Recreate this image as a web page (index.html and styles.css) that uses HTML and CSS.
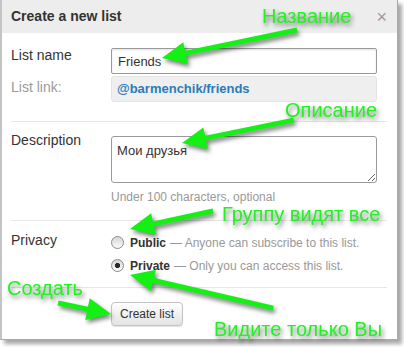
FILE: index.html
```html
<!DOCTYPE html>
<html lang="en">
<head>
<meta charset="utf-8">
<title>Create a new list</title>
<link rel="stylesheet" href="styles.css">
</head>
<body>
<div class="page">
  <div class="dialog">
    <div class="hd">
      <h3 class="title">Create a new list</h3>
      <span class="close">×</span>
    </div>
    <div class="bd">
      <div class="sec sec-name">
        <div class="row">
          <label class="lbl lbl-name">List name</label>
          <input class="field" type="text" value="Friends">
        </div>
        <div class="row row-link">
          <span class="lbl lbl-link">List link:</span>
          <div class="linkbox">@barmenchik/friends</div>
        </div>
      </div>
      <div class="sec sec-desc">
        <div class="row">
          <label class="lbl lbl-desc">Description</label>
          <div class="ctl">
            <textarea class="area">Мои друзья</textarea>
            <div class="help">Under 100 characters, optional</div>
          </div>
        </div>
      </div>
      <div class="sec sec-priv">
        <div class="row">
          <span class="lbl lbl-priv">Privacy</span>
          <div class="ctl">
            <label class="opt"><input class="radio" type="radio" name="p"><b>Public</b><span class="note">— Anyone can subscribe to this list.</span></label>
            <label class="opt"><input class="radio" type="radio" name="p" checked><b>Private</b><span class="note">— Only you can access this list.</span></label>
          </div>
        </div>
      </div>
      <div class="sec sec-btn">
        <div class="row">
          <span></span>
          <div class="ctl"><button class="btn" type="button">Create list</button></div>
        </div>
      </div>
    </div>
  </div>

  <svg class="notes" width="404" height="347" viewBox="0 0 404 347">
    <g class="ink">
      <g transform="translate(162 58) rotate(-11.7)"><line x1="18" y1="0" x2="138" y2="0"/><polygon points="0,0 24,-11 24,11"/></g>
      <g transform="translate(182 143) rotate(-11.6)"><line x1="18" y1="0" x2="114" y2="0"/><polygon points="0,0 24,-11 24,11"/></g>
      <g transform="translate(130 229) rotate(-12.2)"><line x1="18" y1="0" x2="85" y2="0"/><polygon points="0,0 24,-11 24,11"/></g>
      <g transform="translate(130 275) rotate(13)"><line x1="18" y1="0" x2="147" y2="0"/><polygon points="0,0 24,-11 24,11"/></g>
      <g transform="translate(111 314) rotate(191.7)"><line x1="18" y1="0" x2="54" y2="0"/><polygon points="0,0 24,-11 24,11"/></g>
      <text x="262" y="23">Название</text>
      <text x="285" y="117">Описание</text>
      <text x="222" y="221">Группу видят все</text>
      <text x="7" y="295">Создать</text>
      <text x="214" y="336">Видите только Вы</text>
    </g>
  </svg>
</div>
</body>
</html>
```

FILE: styles.css
```css
html, body {
  margin: 0;
  padding: 0;
  background: #fff;
  overflow: hidden;
}

body {
  font-family: "Liberation Sans", Arial, sans-serif;
  color: #333;
}

.page {
  position: relative;
  width: 404px;
  height: 347px;
}

.dialog {
  width: 398px;
  box-sizing: border-box;
  border: 1px solid #a9a9a9;
  border-top: none;
  border-left: 2px solid #c4c4c4;
  background: #fff;
  box-shadow: 4px 4px 4px rgba(0, 0, 0, 0.35);
}

.hd {
  height: 33px;
  background: #ededed;
  display: flex;
  align-items: center;
  justify-content: space-between;
  padding: 0 10px 0 9px;
}

.title {
  margin: 0;
  font-size: 14px;
  font-weight: bold;
  color: #333;
  line-height: 33px;
}

.close {
  font-size: 18px;
  color: #9a9a9a;
  line-height: 1;
}

.bd {
  padding: 0 10px 0 9px;
}

.sec + .sec {
  border-top: 1px solid #e6e6e6;
}

.sec-name { padding: 15px 0 19px; }
.sec-desc { padding: 14px 0 15px; }
.sec-priv { padding: 10px 0 10px; }
.sec-btn  { padding: 14px 0 13px; }

.row {
  display: grid;
  grid-template-columns: 100px 266px;
  align-items: start;
}

.row-link { margin-top: 2px; }

.lbl {
  font-size: 14px;
  line-height: 18px;
  color: #333;
}

.lbl-name { margin-top: -2px; }
.lbl-link { margin-top: 2px; color: #9a9a9a; }
.lbl-desc { margin-top: -5px; }
.lbl-priv { margin-top: 0; }

.field {
  box-sizing: border-box;
  width: 266px;
  height: 26px;
  margin: 0;
  padding: 0 6px;
  border: 1px solid #9a9a9a;
  border-radius: 2px;
  box-shadow: inset 0 1px 2px rgba(0, 0, 0, 0.12);
  font: 13px "Liberation Sans", Arial, sans-serif;
  color: #333;
}

.linkbox {
  box-sizing: border-box;
  height: 26px;
  padding: 0 5px;
  background: #efefef;
  border: 1px solid #e4e4e4;
  border-radius: 3px;
  font-size: 13px;
  font-weight: bold;
  line-height: 24px;
  color: #2b7bb9;
}

.area {
  display: block;
  box-sizing: border-box;
  width: 266px;
  height: 47px;
  margin: 0;
  padding: 6px 5px;
  border: 1px solid #9a9a9a;
  border-radius: 3px;
  font: 13px "Liberation Sans", Arial, sans-serif;
  color: #333;
  resize: vertical;
}

.help {
  margin-top: 6px;
  font-size: 12px;
  line-height: 16px;
  color: #999;
}

.opt {
  display: flex;
  align-items: center;
  height: 23px;
  font-size: 12px;
  white-space: nowrap;
}

.opt b {
  color: #333;
  margin-right: 4px;
}

.note {
  color: #999;
}

.radio {
  appearance: none;
  -webkit-appearance: none;
  box-sizing: border-box;
  width: 13px;
  height: 13px;
  margin: 0 6px 0 0;
  border: 1px solid #8a8a8a;
  border-radius: 50%;
  background: linear-gradient(#d6d6d6, #fbfbfb);
}

.radio:checked {
  background:
    radial-gradient(circle at center, #2a2a2a 0 2.3px, transparent 2.9px),
    linear-gradient(#d6d6d6, #fbfbfb);
}

.btn {
  box-sizing: border-box;
  height: 24px;
  margin: 0;
  padding: 0 8px;
  border: 1px solid #c3c3c3;
  border-radius: 4px;
  background: linear-gradient(#ffffff, #e3e3e3);
  box-shadow: 0 1px 1px rgba(0, 0, 0, 0.12);
  font: 12px "Liberation Sans", Arial, sans-serif;
  color: #333;
}

.notes {
  position: absolute;
  top: 0;
  left: 0;
  pointer-events: none;
}

.ink {
  filter: drop-shadow(2px 3px 2px rgba(0, 0, 0, 0.5));
}

.ink line {
  stroke: #14f014;
  stroke-width: 5;
}

.ink polygon {
  fill: #14f014;
}

.ink text {
  font-family: "Liberation Sans", Arial, sans-serif;
  font-size: 20px;
  fill: #1ef51e;
}
```
